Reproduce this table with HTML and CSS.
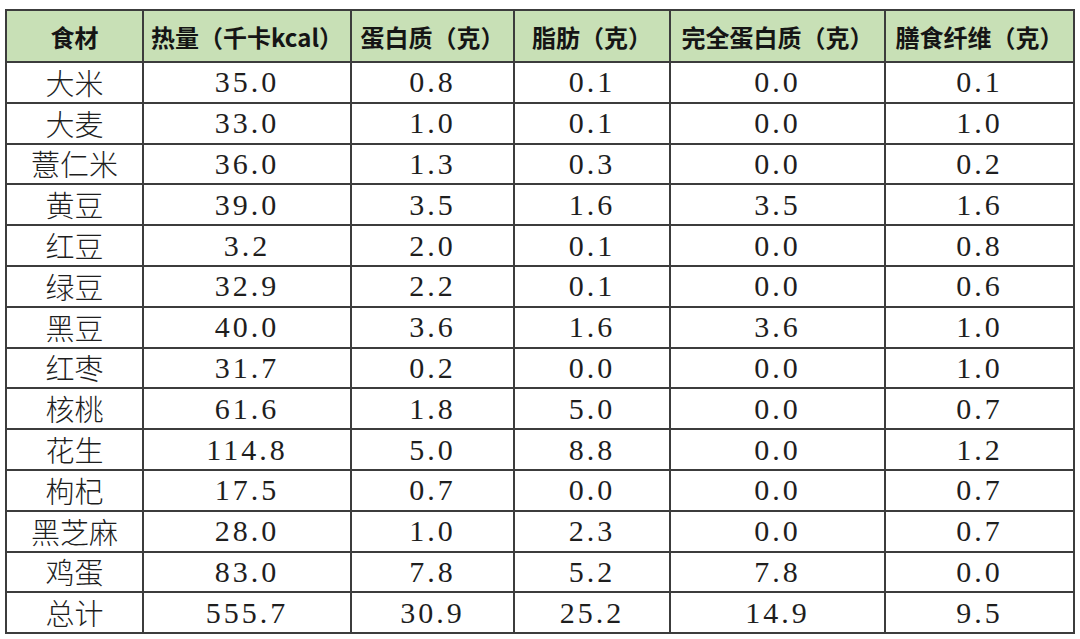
FILE: index.html
```html
<!DOCTYPE html>
<html lang="zh-CN">
<head>
<meta charset="utf-8">
<title>食材营养表</title>
<link rel="stylesheet" href="styles.css">
</head>
<body>
<table class="nutri">
  <colgroup>
    <col class="c1"><col class="c2"><col class="c3"><col class="c4"><col class="c5"><col class="c6">
  </colgroup>
  <thead>
    <tr><th>食材</th><th>热量（千卡kcal）</th><th>蛋白质（克）</th><th>脂肪（克）</th><th>完全蛋白质（克）</th><th>膳食纤维（克）</th></tr>
  </thead>
  <tbody>
    <tr><td class="name">大米</td><td>35.0</td><td>0.8</td><td>0.1</td><td>0.0</td><td>0.1</td></tr>
    <tr><td class="name">大麦</td><td>33.0</td><td>1.0</td><td>0.1</td><td>0.0</td><td>1.0</td></tr>
    <tr><td class="name">薏仁米</td><td>36.0</td><td>1.3</td><td>0.3</td><td>0.0</td><td>0.2</td></tr>
    <tr><td class="name">黄豆</td><td>39.0</td><td>3.5</td><td>1.6</td><td>3.5</td><td>1.6</td></tr>
    <tr><td class="name">红豆</td><td>3.2</td><td>2.0</td><td>0.1</td><td>0.0</td><td>0.8</td></tr>
    <tr><td class="name">绿豆</td><td>32.9</td><td>2.2</td><td>0.1</td><td>0.0</td><td>0.6</td></tr>
    <tr><td class="name">黑豆</td><td>40.0</td><td>3.6</td><td>1.6</td><td>3.6</td><td>1.0</td></tr>
    <tr><td class="name">红枣</td><td>31.7</td><td>0.2</td><td>0.0</td><td>0.0</td><td>1.0</td></tr>
    <tr><td class="name">核桃</td><td>61.6</td><td>1.8</td><td>5.0</td><td>0.0</td><td>0.7</td></tr>
    <tr><td class="name">花生</td><td>114.8</td><td>5.0</td><td>8.8</td><td>0.0</td><td>1.2</td></tr>
    <tr><td class="name">枸杞</td><td>17.5</td><td>0.7</td><td>0.0</td><td>0.0</td><td>0.7</td></tr>
    <tr><td class="name">黑芝麻</td><td>28.0</td><td>1.0</td><td>2.3</td><td>0.0</td><td>0.7</td></tr>
    <tr><td class="name">鸡蛋</td><td>83.0</td><td>7.8</td><td>5.2</td><td>7.8</td><td>0.0</td></tr>
    <tr><td class="name">总计</td><td>555.7</td><td>30.9</td><td>25.2</td><td>14.9</td><td>9.5</td></tr>
  </tbody>
</table>
</body>
</html>
```
FILE: styles.css
```css
html, body {
  margin: 0;
  padding: 0;
  background: #ffffff;
}
body {
  padding: 9px 0 0 5px;
}
.nutri {
  border-collapse: collapse;
  table-layout: fixed;
  width: 1068px;
  color: #1e1e1e;
}
.c1 { width: 137px; }
.c2 { width: 208px; }
.c3 { width: 163px; }
.c4 { width: 156px; }
.c5 { width: 215px; }
.c6 { width: 189px; }
.nutri th,
.nutri td {
  border: 2px solid #3c3c3c;
  padding: 0;
  text-align: center;
  white-space: nowrap;
  overflow: visible;
}
.nutri thead tr {
  height: 52px;
}
.nutri th {
  background: #c8e0b6;
  font-family: "Noto Sans CJK SC", "Noto Sans", sans-serif;
  font-weight: 700;
  font-size: 24px;
  letter-spacing: 0;
  color: #151515;
}
.nutri tbody tr {
  height: 40.8px;
}
.nutri td {
  font-family: "Liberation Serif", "Noto Sans CJK SC", serif;
  font-size: 30px;
  letter-spacing: 3px;
  line-height: 1;
  font-weight: 400;
}
.nutri td.name {
  font-family: "Noto Sans CJK SC", sans-serif;
  font-size: 29px;
  font-weight: 300;
  letter-spacing: 0;
}
```
